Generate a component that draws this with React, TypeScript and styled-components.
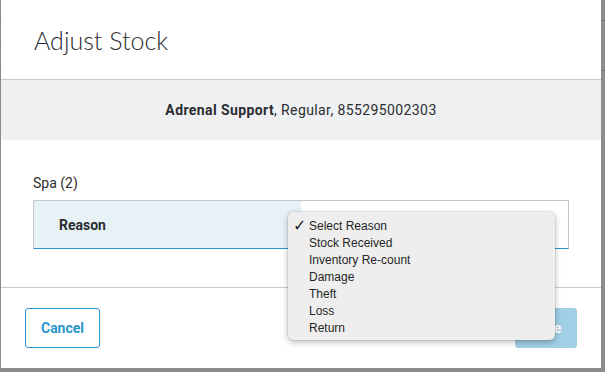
import React from "react";
import styled, { createGlobalStyle } from "styled-components";

const Global = createGlobalStyle`
  html, body { margin: 0; padding: 0; background: #8c8c8c; }
  body { width: 605px; height: 372px; overflow: hidden; font-family: "Roboto", "Liberation Sans", sans-serif; }
`;

const Backdrop = styled.div`
  width: 605px;
  height: 372px;
  background: #8c8c8c;
  position: relative;
`;

const StripeLine = styled.div<{ $top: number; $left?: boolean; $color?: string }>`
  position: absolute;
  ${(p) => (p.$left ? "left: 0; width: 1px;" : "right: 0; width: 4px;")}
  top: ${(p) => p.$top}px;
  height: 1px;
  background: ${(p) => p.$color || "#6f6f6f"};
`;

const Modal = styled.div`
  margin-left: 1px;
  width: 600px;
  height: 368px;
  background: #fff;
  display: flex;
  flex-direction: column;
  position: relative;
`;

const Header = styled.div`
  height: 80px;
  flex: none;
  box-sizing: border-box;
  padding: 1px 0 0 33px;
  display: flex;
  align-items: center;
  border-bottom: 1px solid #c9cacc;
`;

const Title = styled.h1`
  margin: 0;
  font-family: "Lato", sans-serif;
  font-weight: 300;
  font-size: 25px;
  color: #2b2d30;
`;

const InfoBand = styled.div`
  height: 60px;
  flex: none;
  background: #eff0f2;
  display: flex;
  align-items: center;
  justify-content: center;
  font-size: 14px;
  letter-spacing: 0.4px;
  color: #2b2d30;
`;

const Strong = styled.strong`
  font-weight: 700;
`;

const Body = styled.div`
  flex: none;
  padding: 35px 32px 0 32px;
  height: 148px;
  box-sizing: border-box;
  border-bottom: 1px solid #c9cacc;
`;

const SectionLabel = styled.div`
  font-size: 14px;
  color: #2b2d30;
  line-height: 16px;
  margin-bottom: 9px;
`;

const Row = styled.div`
  display: grid;
  grid-template-columns: 1fr 1fr;
  height: 49px;
  box-sizing: border-box;
  border: 1px solid #c2c7cc;
  border-bottom: 1px solid #2b95cf;
`;

const LabelCell = styled.div`
  background: #e7f2f7;
  display: flex;
  align-items: center;
  padding-left: 25px;
  font-size: 14px;
  font-weight: 700;
  color: #2b2d30;
`;

const ValueCell = styled.div`
  background: #fff;
`;

const Footer = styled.div`
  flex: 1;
  display: flex;
  align-items: center;
  justify-content: space-between;
  padding: 0 24px 0 24px;
`;

const Button = styled.button<{ $primary?: boolean }>`
  height: 40px;
  box-sizing: border-box;
  border-radius: 3px;
  font-family: "Roboto", "Liberation Sans", sans-serif;
  font-size: 14px;
  font-weight: 700;
  padding: 0;
  border: 1px solid ${(p) => (p.$primary ? "#a0cfe6" : "#2b95cf")};
  background: ${(p) => (p.$primary ? "#a0cfe6" : "#fff")};
  color: ${(p) => (p.$primary ? "#fff" : "#2b95cf")};
  width: ${(p) => (p.$primary ? "62px" : "75px")};
`;

const Menu = styled.ul`
  position: absolute;
  left: 287px;
  top: 212px;
  width: 267px;
  height: 128px;
  margin: 0;
  padding: 6px 0 0 0;
  list-style: none;
  background: #eeeeee;
  border-radius: 5px;
  box-shadow: 0 2px 6px rgba(0, 0, 0, 0.28), 0 0 0 0.5px rgba(0, 0, 0, 0.12);
  box-sizing: border-box;
`;

const MenuItem = styled.li`
  position: relative;
  height: 17px;
  line-height: 17px;
  padding-left: 21px;
  font-family: "Liberation Sans", Arial, sans-serif;
  font-size: 12px;
  color: #262626;
`;

const Check = styled.span`
  position: absolute;
  left: 5px;
  top: -1px;
  font-family: "DejaVu Sans", sans-serif;
  font-size: 16px;
  color: #1e1e1e;
`;

const reasons = [
  "Select Reason",
  "Stock Received",
  "Inventory Re-count",
  "Damage",
  "Theft",
  "Loss",
  "Return",
];

export default function App() {
  return (
    <>
      <Global />
      <Backdrop>
        <StripeLine $top={20} />
        <StripeLine $top={70} />
        <StripeLine $top={20} $left />
        <StripeLine $top={42} $left $color="#4d7fa0" />
        <StripeLine $top={70} $left />
        <Modal>
          <Header>
            <Title>Adjust Stock</Title>
          </Header>
          <InfoBand>
            <span>
              <Strong>Adrenal Support</Strong>, Regular, 855295002303
            </span>
          </InfoBand>
          <Body>
            <SectionLabel>Spa (2)</SectionLabel>
            <Row>
              <LabelCell>Reason</LabelCell>
              <ValueCell />
            </Row>
          </Body>
          <Footer>
            <Button>Cancel</Button>
            <Button $primary>Save</Button>
          </Footer>
          <Menu>
            {reasons.map((r, i) => (
              <MenuItem key={r}>
                {i === 0 && <Check>✓</Check>}
                {r}
              </MenuItem>
            ))}
          </Menu>
        </Modal>
      </Backdrop>
    </>
  );
}
